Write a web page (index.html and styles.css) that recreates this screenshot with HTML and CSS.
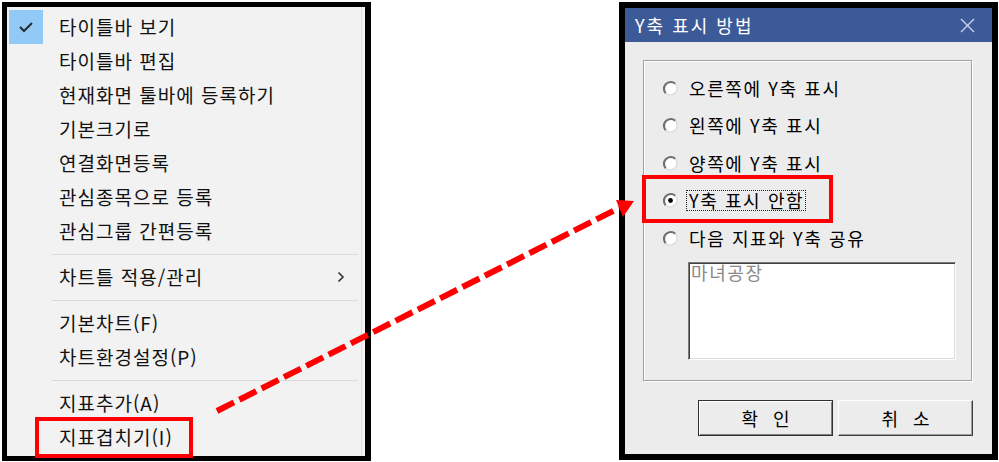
FILE: index.html
```html
<!DOCTYPE html>
<html lang="ko">
<head>
<meta charset="utf-8">
<title>Y축 표시 방법</title>
<link rel="stylesheet" href="styles.css">
</head>
<body>
<div class="stage">
  <div class="menu">
    <div class="item"><span class="check on"><svg width="34" height="34" viewBox="0 0 34 34"><polyline points="11,17 15,21 23,13" fill="none" stroke="#2b2b2b" stroke-width="2"/></svg></span><span class="label">타이틀바 보기</span></div>
    <div class="item"><span class="check"></span><span class="label">타이틀바 편집</span></div>
    <div class="item"><span class="check"></span><span class="label">현재화면 툴바에 등록하기</span></div>
    <div class="item"><span class="check"></span><span class="label">기본크기로</span></div>
    <div class="item"><span class="check"></span><span class="label">연결화면등록</span></div>
    <div class="item"><span class="check"></span><span class="label">관심종목으로 등록</span></div>
    <div class="item"><span class="check"></span><span class="label">관심그룹 간편등록</span></div>
    <div class="sep"></div>
    <div class="item"><span class="check"></span><span class="label">차트틀 적용/관리</span><svg class="sub" width="8" height="12" viewBox="0 0 8 12"><polyline points="1.5,1.5 6,6 1.5,10.5" fill="none" stroke="#333" stroke-width="1.6"/></svg></div>
    <div class="sep"></div>
    <div class="item"><span class="check"></span><span class="label">기본차트(F)</span></div>
    <div class="item"><span class="check"></span><span class="label">차트환경설정(P)</span></div>
    <div class="sep"></div>
    <div class="item"><span class="check"></span><span class="label">지표추가(A)</span></div>
    <div class="item"><span class="check"></span><span class="label">지표겹치기(I)</span></div>
  </div>

  <div class="dialog">
    <div class="titlebar">
      <span class="title">Y축 표시 방법</span>
      <svg class="close" width="15" height="15" viewBox="0 0 15 15"><path d="M1 1 L14 14 M14 1 L1 14" stroke="#c9d3ea" stroke-width="1.4"/></svg>
    </div>
    <div class="body">
      <div class="group">
        <div class="radio"><svg width="17" height="17" viewBox="0 0 17 17"><circle cx="8.5" cy="8.5" r="6.8" fill="#fff"/><path d="M3.7 13.3 A6.8 6.8 0 0 1 13.3 3.7" fill="none" stroke="#6f6f6f" stroke-width="2.2"/><path d="M13.3 3.7 A6.8 6.8 0 0 1 3.7 13.3" fill="none" stroke="#d8d8d8" stroke-width="1.2"/></svg><span>오른쪽에 Y축 표시</span></div>
        <div class="radio"><svg width="17" height="17" viewBox="0 0 17 17"><circle cx="8.5" cy="8.5" r="6.8" fill="#fff"/><path d="M3.7 13.3 A6.8 6.8 0 0 1 13.3 3.7" fill="none" stroke="#6f6f6f" stroke-width="2.2"/><path d="M13.3 3.7 A6.8 6.8 0 0 1 3.7 13.3" fill="none" stroke="#d8d8d8" stroke-width="1.2"/></svg><span>왼쪽에 Y축 표시</span></div>
        <div class="radio"><svg width="17" height="17" viewBox="0 0 17 17"><circle cx="8.5" cy="8.5" r="6.8" fill="#fff"/><path d="M3.7 13.3 A6.8 6.8 0 0 1 13.3 3.7" fill="none" stroke="#6f6f6f" stroke-width="2.2"/><path d="M13.3 3.7 A6.8 6.8 0 0 1 3.7 13.3" fill="none" stroke="#d8d8d8" stroke-width="1.2"/></svg><span>양쪽에 Y축 표시</span></div>
        <div class="radio"><svg width="17" height="17" viewBox="0 0 17 17"><circle cx="8.5" cy="8.5" r="6.8" fill="#fff"/><path d="M3.7 13.3 A6.8 6.8 0 0 1 13.3 3.7" fill="none" stroke="#6f6f6f" stroke-width="2.2"/><path d="M13.3 3.7 A6.8 6.8 0 0 1 3.7 13.3" fill="none" stroke="#d8d8d8" stroke-width="1.2"/><circle cx="8.5" cy="8.5" r="2.4" fill="#000"/></svg><span class="focus">Y축 표시 안함</span></div>
        <div class="radio"><svg width="17" height="17" viewBox="0 0 17 17"><circle cx="8.5" cy="8.5" r="6.8" fill="#fff"/><path d="M3.7 13.3 A6.8 6.8 0 0 1 13.3 3.7" fill="none" stroke="#6f6f6f" stroke-width="2.2"/><path d="M13.3 3.7 A6.8 6.8 0 0 1 3.7 13.3" fill="none" stroke="#d8d8d8" stroke-width="1.2"/></svg><span>다음 지표와 Y축 공유</span></div>
        <div class="list"><span class="list-item">마녀공장</span></div>
      </div>
      <div class="buttons">
        <button class="btn default">확 인</button>
        <button class="btn">취 소</button>
      </div>
    </div>
  </div>

  <svg class="overlay" width="999" height="462" viewBox="0 0 999 462">
    <rect x="37" y="419" width="154" height="37" fill="none" stroke="#ff0000" stroke-width="4"/>
    <rect x="644" y="177" width="187" height="44" fill="none" stroke="#ff0000" stroke-width="4"/>
    <line x1="217" y1="411" x2="619" y2="208" stroke="#ff0000" stroke-width="6" stroke-dasharray="19 6"/>
    <polygon points="616,200 634,201 623,217" fill="#ff0000"/>
  </svg>
</div>
</body>
</html>
```

FILE: styles.css
```css
html, body {
  margin: 0;
  padding: 0;
  background: #ffffff;
}

.stage {
  position: relative;
  width: 999px;
  height: 462px;
  overflow: hidden;
  display: flex;
  align-items: flex-start;
  padding: 2px 0 0 2px;
  box-sizing: border-box;
  font-family: "Noto Sans CJK KR", "Noto Sans", sans-serif;
}

/* ---------- context menu ---------- */
.menu {
  width: 369px;
  height: 459px;
  box-sizing: border-box;
  border: 5px solid #000;
  border-right-width: 6px;
  background: #f2f2f2;
  box-shadow: inset -3px 0 0 #f2f2f2, inset -4px 0 0 #dcdcdc;
  padding-top: 3px;
  color: #111;
  font-size: 19px;
  letter-spacing: 1px;
}

.item {
  height: 34px;
  display: flex;
  align-items: center;
}

.check {
  width: 34px;
  height: 34px;
  margin-left: 2px;
  flex: none;
}

.check.on {
  background: #91c9f7;
}

.check svg {
  display: block;
}

.label {
  margin-left: 16px;
  line-height: 34px;
  white-space: nowrap;
}

.sub {
  margin-left: auto;
  margin-right: 20px;
}

.sep {
  height: 1px;
  background: #dadada;
  margin: 6px 7px 5px 45px;
}

/* ---------- dialog ---------- */
.dialog {
  margin-left: 248px;
  width: 379px;
  height: 458px;
  box-sizing: border-box;
  border: 6px solid #000;
  display: flex;
  flex-direction: column;
}

.titlebar {
  height: 34px;
  flex: none;
  background: #3c5a97;
  display: flex;
  align-items: center;
  padding: 0 17px 0 10px;
}

.title {
  color: #ffffff;
  font-size: 18px;
  letter-spacing: 2px;
  line-height: 20px;
  white-space: nowrap;
}

.close {
  margin-left: auto;
}

.body {
  flex: 1;
  background: #ececec;
  padding: 18px 20px 0 18px;
  color: #000;
  font-size: 18px;
  letter-spacing: 1.6px;
}

.group {
  height: 321px;
  box-sizing: border-box;
  border: 1px solid #a0a0a0;
  box-shadow: inset 1px 1px 0 #ffffff, 1px 1px 0 #ffffff;
  padding: 8.5px 0 0 18px;
}

.radio {
  height: 37.5px;
  display: flex;
  align-items: center;
  white-space: nowrap;
}

.radio svg {
  flex: none;
  margin-right: 10px;
}

.radio span {
  line-height: 19px;
}

.radio .focus {
  border: 1px dotted #222;
  padding: 0 1px 0 2px;
  margin-left: -3px;
}

.list {
  margin: 5px 0 0 26px;
  width: 268px;
  height: 98px;
  box-sizing: border-box;
  background: #ffffff;
  border-top: 1px solid #7a7a7a;
  border-left: 1px solid #7a7a7a;
  border-right: 1px solid #ffffff;
  border-bottom: 1px solid #ffffff;
  box-shadow: inset 1px 1px 0 #404040, inset -1px -1px 0 #dcdcdc;
  padding: 0 0 0 2px;
}

.list-item {
  display: block;
  color: #8a8a8a;
  line-height: 19px;
}

.buttons {
  margin-top: 19px;
  margin-right: -1px;
  display: flex;
  justify-content: flex-end;
  gap: 5px;
}

.btn {
  width: 135px;
  height: 36px;
  box-sizing: border-box;
  background: #ececec;
  font-family: "Noto Sans CJK KR", "Noto Sans", sans-serif;
  font-size: 18px;
  letter-spacing: 5px;
  text-indent: 5px;
  color: #000;
  padding: 0;
  border-top: 1px solid #ffffff;
  border-left: 1px solid #ffffff;
  border-right: 1px solid #404040;
  border-bottom: 1px solid #404040;
  box-shadow: inset -1px -1px 0 #9a9a9a;
  white-space: pre;
}

.btn.default {
  border: 1px solid #303030;
  box-shadow: inset 1px 1px 0 #ffffff, inset -1px -1px 0 #808080;
}

/* ---------- annotation overlay ---------- */
.overlay {
  position: absolute;
  left: 0;
  top: 0;
  pointer-events: none;
}
```
